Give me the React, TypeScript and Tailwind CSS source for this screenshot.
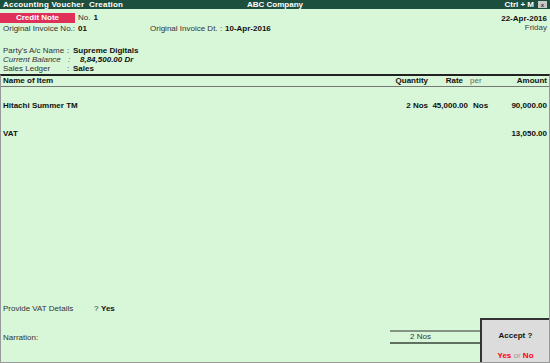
export default function App() {
  return (
    <div className="w-[550px] h-[363px] bg-[#d8f6d8] flex flex-col font-['Liberation_Sans',Arial,sans-serif] text-[8px] leading-none text-[#111] overflow-hidden whitespace-nowrap">
      {/* title bar */}
      <div className="h-[9px] bg-[#1d4f3f] text-white font-bold text-[8px] grid grid-cols-[1fr_auto_1fr] items-center px-[3px]">
        <span className="tracking-[0.2px]">Accounting Voucher&nbsp; Creation</span>
        <span className="text-center">ABC Company</span>
        <div className="flex justify-end items-center">
          <span className="mr-[4px]">Ctrl + M</span>
          <span className="w-[9px] h-[7px] bg-[#c8c8c8] text-[#333] text-[6px] flex items-center justify-center">x</span>
        </div>
      </div>

      {/* header */}
      <div className="flex justify-between pt-[4px] pr-[3px]">
        <div className="flex flex-col">
          <div className="h-[10px] flex items-center">
            <div className="w-[75px] h-[10px] bg-[#e0305a] text-white font-bold flex items-center justify-center">Credit Note</div>
            <span className="ml-[3px] text-[#333]">No.</span>
            <span className="ml-[3px] font-bold">1</span>
          </div>
          <div className="h-[9px] flex items-center mt-[1px] pl-[3px] text-[#333]">
            <span className="w-[75px]">Original Invoice No.:</span>
            <b className="w-[72px] text-[#111]">01</b>
            <span className="w-[70px]">Original Invoice Dt.</span>
            <span className="w-[5px]">:</span>
            <b className="text-[#111]">10-Apr-2016</b>
          </div>
        </div>
        <div className="flex flex-col items-end pt-[1px]">
          <span className="h-[9px] flex items-center font-bold">22-Apr-2016</span>
          <span className="h-[9px] flex items-center text-[#444]">Friday</span>
        </div>
      </div>

      <div className="px-[3px] mt-[13px] flex flex-col text-[#333]">
        <div className="h-[9px] flex items-center">
          <span className="w-[64px] shrink-0">Party's A/c Name</span>
          <span className="w-[6px] shrink-0">:</span>
          <b className="text-[#111]">Supreme Digitals</b>
        </div>
        <div className="h-[9px] flex items-center italic">
          <span className="w-[65px] shrink-0">Current Balance</span>
          <span className="w-[12px] shrink-0">:</span>
          <b className="text-[#111]">8,84,500.00 Dr</b>
        </div>
        <div className="h-[9px] flex items-center">
          <span className="w-[64px] shrink-0">Sales Ledger</span>
          <span className="w-[6px] shrink-0">:</span>
          <b className="text-[#111]">Sales</b>
        </div>
      </div>

      {/* table */}
      <div className="mt-[1px] border-t-2 border-[#222] flex-1 flex flex-col border-l border-r border-l-[#999] border-r-[#999]">
        <div className="h-[11px] flex items-center font-bold border-b border-[#777] px-[2px]">
          <span className="flex-1">Name of Item</span>
          <span className="w-[60px] text-right">Quantity</span>
          <span className="w-[35px] text-right">Rate</span>
          <span className="w-[33px] pl-[7px] font-normal text-[#666]">per</span>
          <span className="w-[51px] text-right">Amount</span>
        </div>
        <div className="h-[9px] flex items-center font-bold px-[2px] mt-[14px]">
          <span className="flex-1">Hitachi Summer TM</span>
          <span className="w-[60px] text-right">2 Nos</span>
          <span className="w-[40px] text-right">45,000.00</span>
          <span className="w-[28px] pl-[5px]">Nos</span>
          <span className="w-[51px] text-right">90,000.00</span>
        </div>
        <div className="h-[9px] flex items-center font-bold px-[2px] mt-[19px]">
          <span className="flex-1">VAT</span>
          <span className="w-[51px] text-right">13,050.00</span>
        </div>

        <div className="flex-1" />

        <div className="h-[9px] flex items-center px-[2px] text-[#333]">
          <span className="w-[91px]">Provide VAT Details</span>
          <span className="w-[7px]">?</span>
          <b className="text-[#111]">Yes</b>
        </div>

        <div className="h-[45px] flex mt-[5px] border-b border-[#999]">
          <div className="w-[389px] flex items-end pl-[2px] pb-[20px] text-[#333]">Narration:</div>
          <div className="w-[90px] flex items-end pb-[18px]">
            <div className="w-full h-[14px] border-t-2 border-b-2 border-t-[#849484] border-b-[#5f705f] flex items-center pl-[20px] text-[#333]">2 Nos</div>
          </div>
          <div className="flex-1 bg-[#dcdcdc] border-l-2 border-t-2 border-[#333] flex flex-col items-center pt-[12px]">
            <span className="font-bold text-[#111]">Accept ?</span>
            <span className="mt-[12px] font-bold text-[#f00]">Yes <span className="font-normal text-[#999]">or</span> No</span>
          </div>
        </div>
      </div>
    </div>
  );
}
